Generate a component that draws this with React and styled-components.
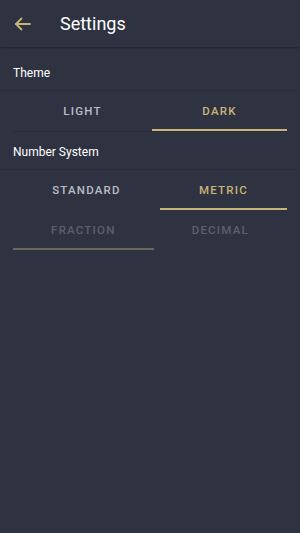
import React, { useState } from 'react';
import styled, { createGlobalStyle } from 'styled-components';

const Global = createGlobalStyle`
  html, body {
    margin: 0;
    padding: 0;
    background: #2f3341;
  }
  body {
    font-family: Roboto, "Noto Sans", sans-serif;
  }
`;

const Page = styled.div`
  min-height: 533px;
  background: #2f3341;
  color: #fff;
`;

const Header = styled.header`
  height: 47px;
  display: flex;
  align-items: center;
  box-shadow: 0 1px 2px rgba(0, 0, 0, 0.35);
  position: relative;
`;

const BackBtn = styled.button`
  width: 46px;
  height: 47px;
  border: 0;
  background: none;
  padding: 0 0 0 14px;
  display: flex;
  align-items: center;
  margin-right: 14px;
`;

const Title = styled.h1`
  margin: 0;
  font-size: 18px;
  font-weight: 400;
  color: #fff;
`;

const Section = styled.section`
  padding-top: ${({ first }) => (first ? '6px' : '0')};
`;

const Label = styled.div`
  padding: 13px 13px 10px;
  font-size: 12px;
  line-height: 14px;
  color: #fff;
  border-bottom: 1px solid #2a2d39;
`;

const TabRow = styled.div`
  display: flex;
  margin: 0 13px;
  border-bottom: ${({ line }) => (line ? '1px solid #2a2d39' : 'none')};
`;

const Tab = styled.button`
  flex: 1 1 auto;
  height: 40px;
  padding: 2px 0 0;
  border: 0;
  background: none;
  font-family: inherit;
  font-size: 11.5px;
  font-weight: 500;
  letter-spacing: 1.2px;
  text-transform: uppercase;
  color: ${({ active, disabled }) =>
    disabled ? '#5c606c' : active ? '#c9b378' : '#b9bdc8'};
  border-bottom: 2px solid
    ${({ active, disabled }) =>
      active ? (disabled ? '#6b675b' : '#c9b378') : 'transparent'};
`;

const Arrow = () => (
  <svg width="17" height="14" viewBox="0 0 17 14" fill="none" stroke="#c9b378" strokeWidth="1.8" strokeLinecap="round" strokeLinejoin="round">
    <path d="M16 7H2" />
    <path d="M7.5 1.5L2 7l5.5 5.5" />
  </svg>
);

const Tabs = ({ options, value, onChange, disabled, line }) => (
  <TabRow line={line}>
    {options.map(o => (
      <Tab
        key={o}
        active={value === o}
        disabled={disabled}
        onClick={() => onChange && onChange(o)}
      >
        {o}
      </Tab>
    ))}
  </TabRow>
);

export default function App() {
  const [theme, setTheme] = useState('dark');
  const [system, setSystem] = useState('metric');

  return (
    <Page>
      <Global />
      <Header>
        <BackBtn><Arrow /></BackBtn>
        <Title>Settings</Title>
      </Header>
      <Section first>
        <Label>Theme</Label>
        <Tabs options={['light', 'dark']} value={theme} onChange={setTheme} line />
      </Section>
      <Section>
        <Label>Number System</Label>
        <Tabs options={['standard', 'metric']} value={system} onChange={setSystem} />
        <Tabs options={['fraction', 'decimal']} value="fraction" disabled />
      </Section>
    </Page>
  );
}
